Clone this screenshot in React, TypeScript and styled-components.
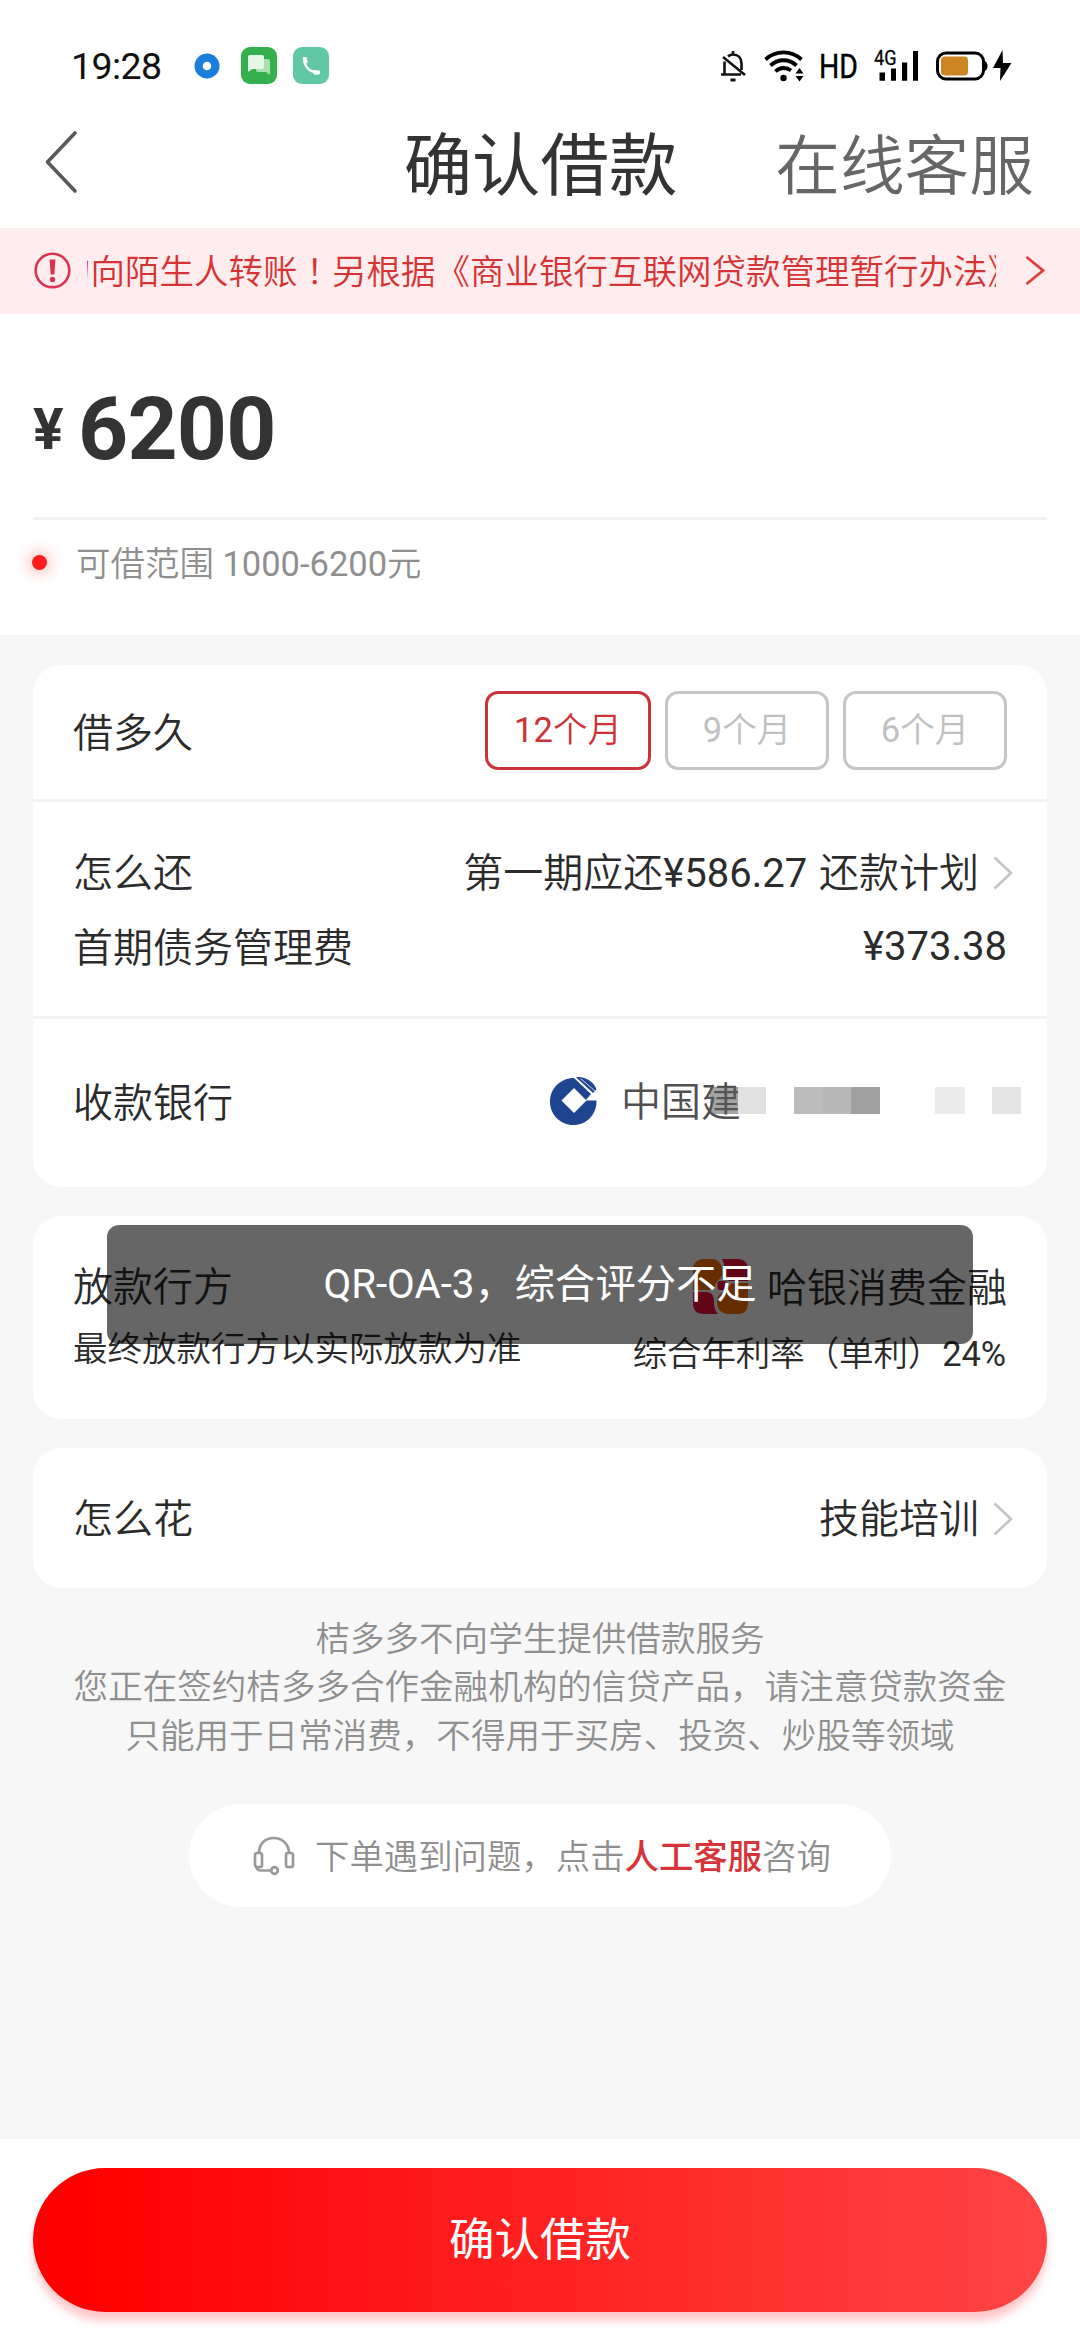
import React from 'react';
import styled, { createGlobalStyle } from 'styled-components';

const GlobalStyle = createGlobalStyle`
  * { box-sizing: border-box; }
  html, body { margin: 0; padding: 0; background: #f7f7f7; }
  body { font-family: Roboto, 'Noto Sans CJK SC', sans-serif; color: #333; font-weight: 350; }
`;

const Screen = styled.div`
  position: relative;
  width: 1080px;
  height: 2340px;
  overflow: hidden;
  display: flex;
  flex-direction: column;
  background: #f7f7f7;
`;

const StatusBar = styled.div`
  height: 96px;
  padding: 37px 68px 0 71px;
  display: flex;
  align-items: flex-start;
  justify-content: space-between;
  background: #fff;
`;

const StatusGroup = styled.div`
  height: 58px;
  display: flex;
  align-items: center;
`;

const Clock = styled.span`
  width: 95px;
  font-size: 37.5px;
  font-weight: 400;
  line-height: 58px;
  letter-spacing: -0.6px;
  color: #111;
`;

const NavBar = styled.div`
  height: 132px;
  padding: 0 46px 0 44px;
  display: grid;
  grid-template-columns: 255px 1fr 255px;
  align-items: center;
  background: #fff;
`;

const NavTitle = styled.h1`
  margin: 0;
  padding: 10px 0 0 3px;
  text-align: center;
  font-size: 68.4px;
  line-height: 96px;
  font-weight: 400;
  color: #333;
  white-space: nowrap;
`;

const NavAction = styled.span`
  padding-top: 10px;
  font-size: 64.7px;
  line-height: 96px;
  color: #666;
  white-space: nowrap;
  justify-self: end;
`;

const Notice = styled.div`
  height: 86px;
  padding: 0 35px 0 34px;
  display: flex;
  align-items: center;
  background: #feecef;
`;

const Marquee = styled.div`
  width: 909px;
  margin-left: 16px;
  overflow: hidden;
  white-space: nowrap;
  font-size: 34.5px;
  line-height: 60px;
  color: #d63434;
  display: flex;
`;

const MarqueeText = styled.span`
  margin: -2px 0 0 -31px;
`;

const CenteredMark = styled.span`
  font-family: 'Noto Sans CJK TC', sans-serif;
`;

const AmountPanel = styled.section`
  height: 321px;
  padding: 65px 33px 0;
  background: #fff;
`;

const AmountRow = styled.div`
  height: 141px;
  display: flex;
  align-items: baseline;
  font-weight: 700;
  line-height: 100px;
  border-bottom: 3px solid #f3f3f3;
`;

const Currency = styled.span`
  width: 45px;
  font-size: 57px;
  transform: translateY(-10px);
`;

const Amount = styled.span`
  font-size: 87.5px;
  letter-spacing: -0.8px;
`;

const RangeRow = styled.div`
  height: 85px;
  display: flex;
  align-items: center;
  gap: 29px;
  font-size: 34.5px;
  color: #8f8f8f;
`;

const RangeText = styled.span`
  padding-bottom: 4px;
`;

const Num = styled.span`
  font-weight: 400;
`;

const Dot = styled.i`
  width: 15px;
  height: 15px;
  margin-left: -1px;
  border-radius: 50%;
  background: #fb1c1c;
  box-shadow: 0 0 14px 4px rgba(255, 60, 60, 0.3);
`;

const Cards = styled.main`
  flex: 1;
  padding: 30px 33px 0;
  display: flex;
  flex-direction: column;
  align-items: stretch;
`;

const Card = styled.section<{ $h: number; $gap?: number }>`
  height: ${(p) => p.$h}px;
  margin-bottom: ${(p) => p.$gap ?? 0}px;
  border-radius: 28px;
  background: #fff;
`;

const Cell = styled.div<{ $h: number; $line?: boolean }>`
  height: ${(p) => p.$h}px;
  padding: 0 41px 0 40px;
  display: flex;
  flex-direction: column;
  justify-content: center;
  border-bottom: ${(p) => (p.$line ? '3px solid #f3f3f3' : '0')};
`;

const Line = styled.div<{ $h: number }>`
  height: ${(p) => p.$h}px;
  display: flex;
  align-items: center;
  justify-content: space-between;
  font-size: 40px;
  line-height: 60px;
  white-space: nowrap;
  color: #2b2b2b;
`;

const Label = styled.span<{ $drop?: number }>`
  padding-top: ${(p) => p.$drop ?? 4}px;
`;

const PlanText = styled(Label)`
  word-spacing: 2px;
`;

const Value = styled.div<{ $arrow?: boolean }>`
  display: flex;
  align-items: center;
  margin-right: ${(p) => (p.$arrow ? '-7px' : '-1px')};
`;

const Small = styled.span`
  padding-top: 1px;
  font-size: 34.5px;
`;

const RateText = styled(Small)`
  padding-top: 10px;
  letter-spacing: -0.1px;
`;

const Chips = styled.div`
  display: flex;
  gap: 14px;
  margin-right: -1px;
  padding-bottom: 3px;
`;

const Chip = styled.button<{ $active?: boolean }>`
  width: ${(p) => (p.$active ? 166 : 164)}px;
  height: 79px;
  padding: 0 0 2px;
  border-radius: 13px;
  border: 3px solid ${(p) => (p.$active ? '#c9343b' : '#c6c6c6')};
  background: #fff;
  color: ${(p) => (p.$active ? '#cf3238' : '#c0c0c0')};
  font: 350 34.5px/60px Roboto, 'Noto Sans CJK SC', sans-serif;
`;

const BankValue = styled(Value)`
  padding-bottom: 5px;
`;

const BankName = styled.span`
  margin-left: 23px;
  padding-top: 5px;
  color: #505050;
`;

const Mosaic = styled.div`
  display: flex;
  margin-left: -31px;
  margin-right: -14px;
`;

const Tile = styled.i<{ $c: string; $w?: number }>`
  width: ${(p) => p.$w ?? 28}px;
  height: 27px;
  background: ${(p) => p.$c};
`;

const LenderName = styled.span`
  margin-left: 19px;
  padding-top: 4px;
`;

const Footnote = styled.p`
  margin: 27px 0 0;
  text-align: center;
  font-size: 34.55px;
  line-height: 48.4px;
  color: #8f8f8f;
  white-space: nowrap;
`;

const HelpPill = styled.div`
  width: 702px;
  height: 103px;
  margin: 44px auto 0;
  padding-left: 64px;
  border-radius: 52px;
  background: #fff;
  display: flex;
  align-items: center;
  gap: 20px;
  font-size: 34.4px;
  color: #8f8f8f;
  white-space: nowrap;
`;

const HelpText = styled.span`
  padding-bottom: 3px;
`;

const HelpLink = styled.b`
  font-weight: 500;
  color: #d6343a;
`;

const BottomBar = styled.footer`
  height: 201px;
  padding: 29px 33px 0;
  background: #fff;
`;

const Submit = styled.button`
  display: block;
  width: 1014px;
  height: 144px;
  padding: 2px 0 0;
  border: 0;
  border-radius: 72px;
  background: linear-gradient(90deg, #ff0000 5%, #ff4545 100%);
  box-shadow: 0 9px 8px rgba(255, 70, 80, 0.3);
  color: #fff;
  font: 400 45.5px/60px Roboto, 'Noto Sans CJK SC', sans-serif;
`;

const Toast = styled.div`
  position: absolute;
  left: 107px;
  top: 1225px;
  width: 866px;
  height: 119px;
  border-radius: 12px;
  background: rgba(0, 0, 0, 0.6);
  color: #fff;
  font-size: 40.3px;
  font-weight: 400;
  line-height: 120px;
  text-align: center;
`;

const Icon = styled.svg<{ $ml?: string }>`
  display: block;
  flex: none;
  overflow: visible;
  margin-left: ${(p) => p.$ml ?? '0'};
`;

const Arrow = () => (
  <Icon $ml="14px" width="20" height="36" viewBox="0 0 20 36" fill="none" stroke="#c4c4c4" strokeWidth="2.6">
    <path d="M1.500 3.500 18 19 1.500 34.500" />
  </Icon>
);

const NoticeArrow = () => (
  <Icon $ml="auto" width="20" height="30" viewBox="0 0 20 30" fill="none" stroke="#e03c3c" strokeWidth="2.8">
    <path d="M1.500 1 18 14.500 1.500 28" />
  </Icon>
);

const AppIcons = () => (
  <Icon $ml="27px" width="136" height="40" viewBox="0 0 136 40">
    <circle cx="14" cy="20" r="12.5" fill="#1a7fdc" />
    <circle cx="14" cy="20" r="4.3" fill="#fff" />
    <rect x="48" y="1" width="36" height="37" rx="9" fill="#34b04e" />
    <path d="M63 13h12q2 0 2 2v14l-4-3H65q-2 0-2-2z" fill="#a9dfb3" />
    <path d="M57 9h12q2 0 2 2v10q0 2-2 2H59l-4 3V11q0-2 2-2z" fill="#e6f7e8" />
    <rect x="100" y="1" width="36" height="37" rx="9" fill="#62c7a5" />
    <path d="M111.500 13c0 8 5 13 13.500 13.500" fill="none" stroke="#fff" strokeWidth="2.400" />
    <path d="M110.200 11.500h3l1 5-3 1.200zM120.500 24.500l5.800.5v3l-5 .3z" fill="#fff" stroke="#fff" strokeLinejoin="round" />
  </Icon>
);

const Bell = () => (
  <Icon width="26" height="32" viewBox="0 0 26 32" fill="none" stroke="#111" strokeWidth="2.6">
    <path d="M13 1v3.500M4.500 24V11.500M8 6.500C9.500 5 11 4.500 13 4.500c5 0 8.500 3.500 8.500 9V20M1 24.500h20M3 7l22 18" />
    <path d="M10.500 30h5" strokeWidth="3" />
  </Icon>
);

const Wifi = () => (
  <Icon $ml="18px" width="42" height="32" viewBox="0 0 42 32" fill="none" stroke="#000" strokeWidth="3.800">
    <path d="M1.500 9.500c10-9.500 26-9.500 36 0M6.500 15.500c7.500-7 18.500-7 26 0M11.500 21.500c4.500-4.500 11-4.500 15.500-1" />
    <circle cx="19.500" cy="28" r="3.200" fill="#000" stroke="none" />
    <path d="M31.500 23.500l4-5.500 4 5.500zM31.500 26l4 5.500 4-5.500z" fill="#000" stroke="none" />
  </Icon>
);

const Hd = () => (
  <Icon $ml="14px" width="38" height="34" viewBox="0 0 38 34">
    <text x="-1" y="28.500" fontFamily="Roboto, sans-serif" fontSize="33.500" fontWeight="400" textLength="39" lengthAdjust="spacingAndGlyphs" stroke="#000" strokeWidth=".4">HD</text>
  </Icon>
);

const Signal = () => (
  <Icon $ml="16px" width="46" height="34" viewBox="0 0 46 34">
    <text x="0" y="16" fontFamily="Roboto, sans-serif" fontSize="20" fontWeight="400" textLength="22.500" lengthAdjust="spacingAndGlyphs" stroke="#000" strokeWidth=".3">4G</text>
    <path d="M5.500 23.500h5.500v8.300H5.500zM17 19.500h5v12.300h-5zM28 13.500h5.200v18.300H28zM39 2h5v29.800h-5z" />
  </Icon>
);

const Battery = () => (
  <Icon $ml="16px" width="76" height="34" viewBox="0 0 76 34">
    <rect x="1.500" y="4" width="46" height="26" rx="8.500" fill="#fff" stroke="#000" strokeWidth="3" />
    <path d="M48.500 12q3 1 3 5t-3 5z" />
    <rect x="5" y="7.500" width="27" height="19" rx="4" fill="#cb8521" />
    <path d="M66.500 1 57 19h7.500L64 32l11.500-18h-8.500z" />
  </Icon>
);

const BackArrow = () => (
  <Icon width="34" height="62" viewBox="0 0 34 62" fill="none" stroke="#595959" strokeWidth="3.600" strokeLinecap="round" strokeLinejoin="round">
    <path d="M31 2 3.500 31 31 60" />
  </Icon>
);

const Warn = () => (
  <Icon width="37" height="38" viewBox="0 0 37 38">
    <circle cx="18.500" cy="18.500" r="16.800" fill="none" stroke="#d83452" strokeWidth="2.600" />
    <path d="M15.600 7.500h5.800l-1 15h-3.800z" fill="#d83452" />
    <circle cx="18.500" cy="27.500" r="2.700" fill="#d83452" />
  </Icon>
);

const BankLogo = () => (
  <Icon width="48" height="50" viewBox="0 0 48 50">
    <path d="M24 2C11 2 0 12 0 25.500S10.500 49 23.500 49 46.500 38.500 46.500 25.500L46.400 24.500H36.500L24 37 11.500 24.500 24 12l12 12 5-6z" fill="#1f4590" />
    <path d="M26 1.200C33 -.5 44 5 46.500 13.500L43 17z" fill="#1f4590" />
    <path d="M30.500 2.500 45 15" stroke="#fff" strokeWidth=".8" />
  </Icon>
);

const LenderLogo = () => (
  <Icon width="55" height="55" viewBox="0 0 55 55">
    <path d="M11 0h8c6 0 10 5 10 11v4c0 5-6 6-7 12-1 3-5 4-9 4H0V11C0 4 4 0 11 0z" fill="#ff7000" />
    <path d="M29 0h15q11 0 11 11v11H38c-5 0-7-3-7-8 0-6 1-9-2-14z" fill="#f5103c" />
    <rect x="24.500" y="22" width="9" height="9" rx="2" fill="#f5103c" />
    <path d="M0 33h13c6 0 8 4 8 9 0 6 1 9 4 13H11Q0 55 0 44z" fill="#f5103c" />
    <path d="M55 24v20q0 11-11 11h-8c-8 0-12-5-12-12 0-7 3-9 9-10 3-1 3-9 7-9z" fill="#ff7000" />
  </Icon>
);

const Headset = () => (
  <Icon width="42" height="40" viewBox="0 0 42 40" fill="none" stroke="#999" strokeWidth="2.700">
    <path d="M6 17C6 8 12 2 20.500 2S36 8 36 17" />
    <rect x="2" y="17" width="7" height="14" rx="2" />
    <rect x="33" y="17" width="7" height="14" rx="2" />
    <path d="M3 30q1 4.500 5 4.500h10" />
    <circle cx="21.500" cy="34.500" r="3.300" />
  </Icon>
);

const terms = [
  { months: 12, active: true },
  { months: 9, active: false },
  { months: 6, active: false },
];

export default function App() {
  return (
    <Screen>
      <GlobalStyle />
      <StatusBar>
        <StatusGroup>
          <Clock>19:28</Clock>
          <AppIcons />
        </StatusGroup>
        <StatusGroup>
          <Bell />
          <Wifi />
          <Hd />
          <Signal />
          <Battery />
        </StatusGroup>
      </StatusBar>
      <NavBar>
        <BackArrow />
        <NavTitle>确认借款</NavTitle>
        <NavAction>在线客服</NavAction>
      </NavBar>
      <Notice>
        <Warn />
        <Marquee>
          <MarqueeText>
            勿向陌生人转账<CenteredMark>！</CenteredMark>另根据《商业银行互联网贷款管理暂行办法》
          </MarqueeText>
        </Marquee>
        <NoticeArrow />
      </Notice>
      <AmountPanel>
        <AmountRow>
          <Currency>¥</Currency>
          <Amount>6200</Amount>
        </AmountRow>
        <RangeRow>
          <Dot />
          <RangeText>可借范围 <Num>1000-6200</Num>元</RangeText>
        </RangeRow>
      </AmountPanel>
      <Cards>
        <Card $h={522} $gap={29}>
          <Cell $h={137} $line>
            <Line $h={79}>
              <Label>借多久</Label>
              <Chips>
                {terms.map((t) => (
                  <Chip key={t.months} $active={t.active}><Num>{t.months}</Num>个月</Chip>
                ))}
              </Chips>
            </Line>
          </Cell>
          <Cell $h={217} $line>
            <Line $h={75}>
              <Label $drop={5}>怎么还</Label>
              <Value $arrow><PlanText>第一期应还<Num>¥586.27</Num> 还款计划</PlanText><Arrow /></Value>
            </Line>
            <Line $h={75}>
              <Label>首期债务管理费</Label>
              <Value><Num>¥373.38</Num></Value>
            </Line>
          </Cell>
          <Cell $h={168}>
            <Line $h={75}>
              <Label $drop={1}>收款银行</Label>
              <BankValue>
                <BankLogo />
                <BankName>中国建</BankName>
                <Mosaic>
                  <Tile $c="rgba(90,90,90,.55)" />
                  <Tile $c="#e1e1e1" />
                  <Tile $c="transparent" />
                  <Tile $c="#bcbcbc" $w={29} />
                  <Tile $c="#b8b8b8" />
                  <Tile $c="#a0a0a0" $w={29} />
                  <Tile $c="transparent" $w={55} />
                  <Tile $c="#ebebeb" $w={30} />
                  <Tile $c="transparent" $w={27} />
                  <Tile $c="#e4e4e4" $w={29} />
                </Mosaic>
              </BankValue>
            </Line>
          </Cell>
        </Card>
        <Card $h={203} $gap={29}>
          <Cell $h={203}>
            <Line $h={62}>
              <Label $drop={3}>放款行方</Label>
              <Value>
                <LenderLogo />
                <LenderName>哈银消费金融</LenderName>
              </Value>
            </Line>
            <Line $h={62}>
              <Small>最终放款行方以实际放款为准</Small>
              <RateText>综合年利率（单利）<Num>24%</Num></RateText>
            </Line>
          </Cell>
        </Card>
        <Card $h={140}>
          <Cell $h={140}>
            <Line $h={75}>
              <Label>怎么花</Label>
              <Value $arrow><Label>技能培训</Label><Arrow /></Value>
            </Line>
          </Cell>
        </Card>
        <Footnote>
          桔多多不向学生提供借款服务
          <br />
          您正在签约桔多多合作金融机构的信贷产品，请注意贷款资金
          <br />
          只能用于日常消费，不得用于买房、投资、炒股等领域
        </Footnote>
        <HelpPill>
          <Headset />
          <HelpText>
            下单遇到问题，点击<HelpLink>人工客服</HelpLink>咨询
          </HelpText>
        </HelpPill>
      </Cards>
      <BottomBar>
        <Submit>确认借款</Submit>
      </BottomBar>
      <Toast>QR-OA-3，综合评分不足</Toast>
    </Screen>
  );
}
